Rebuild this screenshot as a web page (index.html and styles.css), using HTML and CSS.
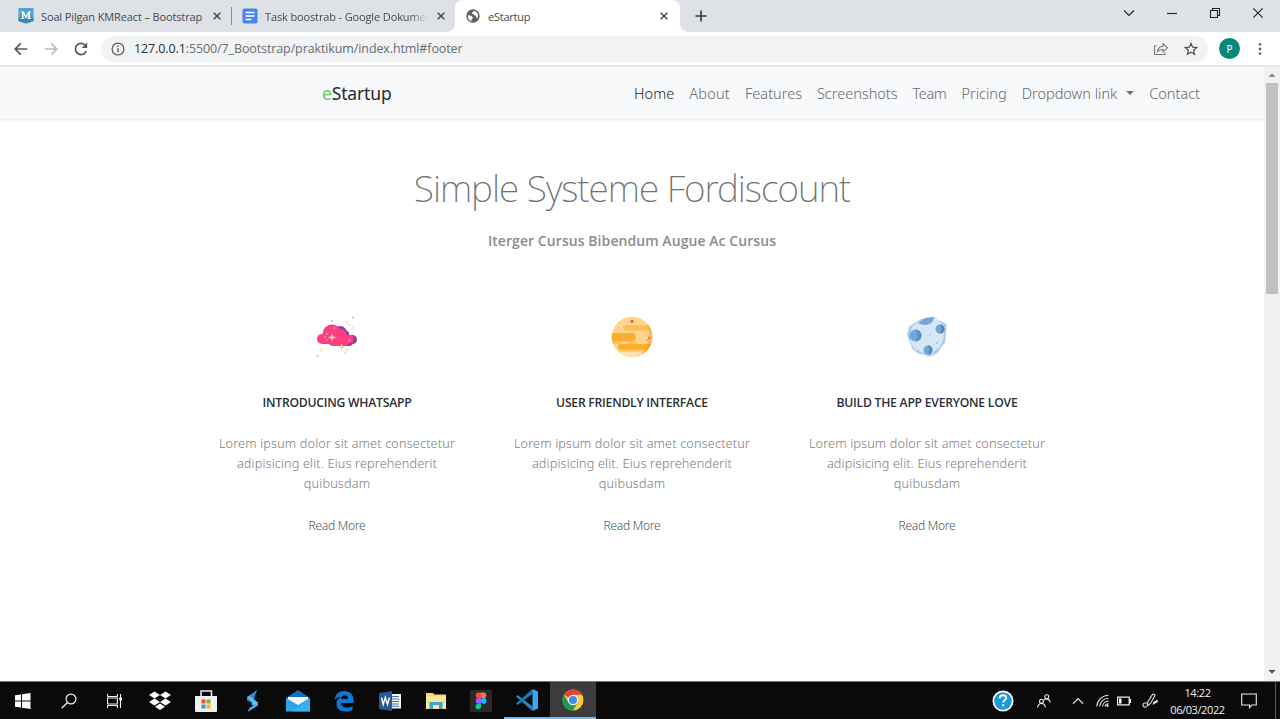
FILE: index.html
```
<!DOCTYPE html>
<html lang="en">
<head>
<meta charset="utf-8">
<title>eStartup</title>
<link rel="stylesheet" href="styles.css">
</head>
<body>
<div class="screen">
  <header class="tabstrip">
    <div class="tab tab-first">
      <svg class="favicon" width="16" height="16" viewBox="0 0 16 16"><path d="M0.5 0h15v13L8 15.6 0.5 13z" fill="#4aa5cf"/><path d="M0.5 9.500h15V13L8 15.600 0.500 13z" fill="#3c88ae"/><path d="M3 11V10h1V4.500H3v-1h3l2 4.500 2-4.500h3v1h-1V10h1v1h-3.500v-1h.7V5.800L8.500 10h-1L5.500 5.800V10h.8v1z" fill="#fff"/></svg>
      <span class="tab-title">Soal Pilgan KMReact – Bootstrap</span>
      <svg class="x" width="8" height="8" viewBox="0 0 8 8"><path d="M.7.7l6.600 6.600M7.300.7L.7 7.300"/></svg>
    </div>
    <i class="divider"></i>
    <div class="tab tab-second">
      <svg class="favicon" width="16" height="16" viewBox="0 0 16 16"><rect x=".5" y=".5" width="15" height="15" rx="2" fill="#4884ee"/><path d="M3.500 4.500h9M3.500 8h9M3.500 11.500h6" stroke="#fff" stroke-width="1.700"/></svg>
      <span class="tab-title fade">Task boostrab - Google Dokumen</span>
      <svg class="x" width="8" height="8" viewBox="0 0 8 8"><path d="M.7.7l6.600 6.600M7.300.7L.7 7.300"/></svg>
    </div>
    <div class="tab tab-active">
      <svg class="favicon" width="14" height="14" viewBox="0 0 14 14"><circle cx="7" cy="7" r="6.700" fill="#5f6368"/><path d="M2 6.200l3.200.5 1.600 1.500-.2 1.500-1.200.6.100 1.900C3 11.500 1.600 9 2 6.200zM8 1.700c-.4 1.500-1.600 1-2 2.200-.2 1.300 1.300.9 1.800 1.900.4 1 1.500.6 2.100 1.100.9.700.2 2 1.500 2.300C13.100 6.600 11.500 2.500 8 1.700z" fill="#fff"/></svg>
      <span class="tab-title">eStartup</span>
      <svg class="x" width="8" height="8" viewBox="0 0 8 8"><path d="M.7.7l6.600 6.600M7.300.7L.7 7.300"/></svg>
    </div>
    <svg class="newtab" width="12" height="12" viewBox="0 0 12 12"><path d="M6 .5v11M.5 6h11" stroke="#35383c" stroke-width="1.600"/></svg>
    <div class="winctl">
      <svg width="12" height="12" viewBox="0 0 12 12"><path d="M1 3.500l5 5 5-5"/></svg>
      <svg width="12" height="12" viewBox="0 0 12 12"><path d="M1 6.500h10"/></svg>
      <svg width="12" height="12" viewBox="0 0 12 12"><path d="M1.500 3.500h7v7h-7zM3.500 3.500v-2h7v7h-2"/></svg>
      <svg width="12" height="12" viewBox="0 0 12 12"><path d="M1.300 1.300l9.400 9.400M10.700 1.300l-9.400 9.400"/></svg>
    </div>
  </header>
  <div class="toolbar">
    <svg class="back" width="14" height="14" viewBox="0 0 14 14"><path d="M13.300 7H1.200M6.800 1.300L1.200 7l5.600 5.700" stroke="#54575b"/></svg>
    <svg class="fwd" width="14" height="14" viewBox="0 0 14 14"><path d="M.7 7h12.100M7.200 1.300L12.800 7l-5.600 5.700" stroke="#b9bbbe"/></svg>
    <svg class="reload" width="14" height="14" viewBox="0 0 14 14"><path d="M12.200 9A5.600 5.600 0 1 1 11 3l1.300 1.400" stroke="#54575b"/><path d="M13.200.6v5.400H7.800z" fill="#54575b" stroke="none"/></svg>
    <div class="omnibox">
      <svg class="info" width="14" height="14" viewBox="0 0 14 14"><circle cx="7" cy="7" r="5.900" fill="none" stroke="#5f6368" stroke-width="1.300"/><path d="M7 6.200v4M7 3.500v1.500" stroke="#5f6368" stroke-width="1.500"/></svg>
      <span class="url"><b>127.0.0.1</b>:5500/7_Bootstrap/praktikum/index.html#footer</span>
      <svg class="share" width="16" height="14" viewBox="0 0 16 14"><path d="M3.500 4H1.500v8.500h10.500V10.500M4.500 9.500c.5-3.300 2.300-5 5.500-5.200V1.800l4.500 4-4.500 4V7.500C7.500 7.400 5.800 8 4.500 9.500z" fill="none" stroke="#77797d" stroke-width="1.100"/></svg>
      <svg class="star" width="14" height="14" viewBox="0 0 14 14"><path d="M7 1.500l1.700 3.700 4 .4-3 2.700.9 4L7 10.200l-3.600 2.100.9-4-3-2.700 4-.4z" fill="none" stroke="#505357" stroke-width="1.300"/></svg>
    </div>
    <span class="avatar">P</span>
    <svg class="dots" width="4" height="14" viewBox="0 0 4 14"><path d="M.8 1.200h2.400v2.400H.8zM.8 5.800h2.400v2.400H.8zM.8 10.400h2.400v2.400H.8z" fill="#5f6368"/></svg>
  </div>
  <div class="viewport">
    <main class="page">
      <nav class="navbar">
        <a class="brand"><em>e</em>Startup</a>
        <div class="links">
          <a class="on">Home</a><a class="wide">About</a><a>Features</a><a>Screenshots</a><a class="tight">Team</a><a>Pricing</a><a class="drop">Dropdown link<i class="caret"></i></a><a>Contact</a>
        </div>
      </nav>
      <section class="intro">
        <h1>Simple Systeme Fordiscount</h1>
        <h2>Iterger Cursus Bibendum Augue Ac Cursus</h2>
      </section>
      <section class="cards">
        <article class="card">
          <svg width="42" height="42" viewBox="0 0 42 42"><g fill="#8f3f9c"><circle cx="24" cy="17" r="7"/><circle cx="28" cy="19" r="5.300"/><circle cx="36.500" cy="23.500" r="4.500"/><rect x="24" y="21" width="13" height="9" rx="4"/></g><g fill="#fc3f7e"><circle cx="16" cy="18" r="9.500"/><circle cx="24.500" cy="19" r="6"/><circle cx="33.500" cy="23" r="4"/><rect x="1" y="18" width="18" height="10" rx="5"/><rect x="12" y="19" width="22" height="11" rx="5"/></g><g fill="#ffd9a0"><path d="M16 17l1.100 3.400 3.400 1.100-3.400 1.100L16 26l-1.100-3.400-3.400-1.100 3.400-1.100zM25.500 27l.9 3.100 3.100.9-3.100.9-.9 3.100-.9-3.100-3.100-.9 3.100-.9z"/><path d="M37 9l.8 2.700 2.700.8-2.700.8L37 16l-.8-2.700-2.700-.8 2.700-.8zM5 30.500l.8 2.700 2.700.8-2.700.8L5 37.500l-.8-2.700-2.700-.8 2.700-.8z" opacity=".65"/></g><g fill="#edae5c"><circle cx="37" cy="1.500" r=".9"/><circle cx="31" cy="6" r=".8"/><circle cx="33" cy="9" r=".8"/><circle cx="16" cy="5" r=".9"/><circle cx="1.500" cy="40" r=".9"/><circle cx="29" cy="37" r=".8"/><circle cx="31" cy="34" r=".8"/></g><g fill="#ffb5bd"><circle cx="9" cy="21" r=".8"/><circle cx="11" cy="18" r=".8"/><circle cx="18" cy="12" r=".8"/><circle cx="11" cy="24" r=".8"/><circle cx="34" cy="24" r=".7"/></g></svg>
          <h3>INTRODUCING WHATSAPP</h3>
          <p>Lorem ipsum dolor sit amet consectetur<br>adipisicing elit. Eius reprehenderit<br>quibusdam</p>
          <a class="more">Read More</a>
        </article>
        <article class="card">
          <svg width="42" height="42" viewBox="0 0 42 42"><defs><clipPath id="planet"><circle cx="21" cy="21" r="20.300"/></clipPath></defs><g clip-path="url(#planet)"><path fill="#ffd48d" d="M0 0h42v42H0z"/><rect x="12" y="9" width="32" height="5.500" rx="2.700" fill="#fdbd57"/><path d="M0 17h20.500a4.200 4.200 0 0 1 0 8.400H0z" fill="#fbad30"/><path d="M20 25.400h6v3H16z" fill="#fdc364"/><rect x="7" y="28" width="36" height="5.500" rx="2.700" fill="#fbad30"/><path d="M0 25.400h10v2.700H0zM8 33.500h34v2H8z" fill="#fdbd57"/><path d="M0 35.500h28.500a1.500 1.500 0 0 1 0 3H26V42H0z" fill="#ffe3b4"/><path d="M33 3c8 9 6 27-4 38l13 1V3z" fill="#f89b24" opacity=".55"/></g><circle cx="21" cy="5.300" r="1.600" fill="#ef5b45"/><circle cx="38" cy="22" r="1" fill="#ef5b45"/><circle cx="36" cy="24" r=".7" fill="#ef7645"/><circle cx="7" cy="12" r=".8" fill="#fbad50"/></svg>
          <h3>USER FRIENDLY INTERFACE</h3>
          <p>Lorem ipsum dolor sit amet consectetur<br>adipisicing elit. Eius reprehenderit<br>quibusdam</p>
          <a class="more">Read More</a>
        </article>
        <article class="card">
          <svg width="42" height="42" viewBox="0 0 42 42"><defs><clipPath id="rock"><path d="M11 5.500C15 2 20 1 24 1.500L28 .8l3 2.700 7 3 2.500 2-.5 9-1 9-4 5-3 5-6 3.500-3 .5-5-2-6-1-6-5-2-6-3-8 2-8z"/></clipPath></defs><g clip-path="url(#rock)"><path d="M0 0h42v42H0z" fill="#a8cdec"/><path d="M12 6l7-4h10l9 7-.5 14-4 8-8 7-7-1-8-2-5-6-2-11 3-8z" fill="#d5e6f5"/><path d="M12 7q8-7 15-6 2 3-2 6-6 4-13 0z" fill="#71a6d5"/></g><circle cx="9.500" cy="19.500" r="6" fill="#71a6d5"/><path d="M9.500 13.500a6 6 0 0 1 0 12q4-6 0-12z" fill="#5d90c5"/><circle cx="34" cy="13" r="4.500" fill="#71a6d5"/><path d="M34 8.500a4.500 4.500 0 0 1 0 9q3-4 0-9z" fill="#5387bd"/><circle cx="22" cy="34" r="4.500" fill="#71a6d5"/><path d="M22 29.500a4.500 4.500 0 0 1 0 9q3-4 0-9z" fill="#5387bd"/><g fill="#93bde2"><circle cx="22" cy="20" r=".8"/><circle cx="24" cy="18" r=".8"/><circle cx="31" cy="27" r=".9"/><circle cx="12" cy="35" r=".9"/></g></svg>
          <h3>BUILD THE APP EVERYONE LOVE</h3>
          <p>Lorem ipsum dolor sit amet consectetur<br>adipisicing elit. Eius reprehenderit<br>quibusdam</p>
          <a class="more">Read More</a>
        </article>
      </section>
    </main>
    <aside class="scroll">
      <svg width="16" height="16" viewBox="0 0 16 16"><path d="M4.500 10L8 6.300l3.500 3.700z" fill="#8b8b8b"/></svg>
      <i class="thumb"></i>
      <svg width="16" height="16" viewBox="0 0 16 16"><path d="M4.500 5L8 8.700 11.500 5z" fill="#505050"/></svg>
    </aside>
  </div>
  <footer class="taskbar">
    <div class="apps">
      <span class="app"><svg width="16" height="16" viewBox="0 0 16 16"><path d="M0 2.200L6 1.400v6.100H0zM7 1.300L15.500 0v7.500H7zM0 8.400h6v6.200l-6-.8zM7 8.400h8.500V16L7 14.800z" fill="#fff"/></svg></span>
      <span class="app"><svg width="16" height="16" viewBox="0 0 16 16"><circle cx="10" cy="6" r="4.900" fill="none" stroke="#eee" stroke-width="1.200"/><path d="M6.500 9.500L.7 15.300" stroke="#eee" stroke-width="1.300"/></svg></span>
      <span class="app"><svg width="16" height="16" viewBox="0 0 16 16"><path d="M.6 1v2.500h9.800V1M.6 15v-2.500h9.800V15M.6 5h9.800v6H.6zM13.500 1v14" fill="none" stroke="#eee" stroke-width="1.100"/><path d="M12.300 4.500h2.700v2.800h-2.700z" fill="#fff"/></svg></span>
      <span class="app"><svg width="22" height="20" viewBox="0 0 22 20"><path d="M5.500.5L11 4 5.500 7.500 0 4zM16.500.5L22 4l-5.500 3.500L11 4zM5.500 7.500L11 11l-5.500 3.500L0 11zM16.500 7.500L22 11l-5.500 3.500L11 11zM11 12.500l5 3.200-5 3.300-5-3.300z" fill="#fff"/></svg></span>
      <span class="app"><svg width="22" height="22" viewBox="0 0 22 22"><path d="M6 7V1h10.500V7" fill="none" stroke="#eee" stroke-width="1.500"/><path d="M0 6h22v15q0 1-1 1H1q-1 0-1-1z" fill="#f0f0f0"/><path d="M6.500 9.500h4v4h-4z" fill="#e9512a"/><path d="M11.500 9.500h4v4h-4z" fill="#76b629"/><path d="M6.500 14.500h4v4h-4z" fill="#299fdf"/><path d="M11.500 14.500h4v4h-4z" fill="#f3b521"/></svg></span>
      <span class="app"><svg width="12" height="22" viewBox="0 0 12 22"><path d="M11 0L1 7v3.500L6.500 13 8.300 8z" fill="#3f83d6"/><path d="M1 7.500l2.500-1.500L12 12.500 8.500 16 5.500 14.500 6 12z" fill="#51c5f2"/><path d="M1.500 22L3.500 18l8.500-5.500V15.500z" fill="#56a5e4"/></svg></span>
      <span class="app"><svg width="24" height="22" viewBox="0 0 24 22"><path d="M0 8L12 0l12 8v13H0z" fill="#176fc0"/><path d="M2 7h20v9H2z" fill="#f4f8fb"/><path d="M0 8l12 7 12-7v13.500H0z" fill="#2aa5ec"/><path d="M24 8L6 21.500h18z" fill="#46b8f4" opacity=".6"/></svg></span>
      <span class="app"><svg width="20" height="22" viewBox="0 0 20 22"><path d="M.5 10C1.500 4 5 1 10.500 1 16.500 1 19.500 5 19.500 10.500V13H7c.2 3 2.200 4.500 5.500 4.500 2.400 0 4.300-.6 6-1.600v4c-2 1-4.500 1.600-7 1.600C6 21.500 2.500 18.500 2.500 14c0-3.500 1.800-6 4.500-7.300C4.500 7 2 8 .5 10zM7 9h7c0-2.300-1-3.700-3.300-3.700C8.600 5.300 7.400 6.700 7 9z" fill="#0b78d3" fill-rule="evenodd"/></svg></span>
      <span class="app"><svg width="22" height="20" viewBox="0 0 22 20"><path d="M11 3h11v14.500H11z" fill="#f4f6fa"/><path d="M13 5.500h7M13 8h7M13 10.500h7M13 13h7M13 15.300h7" stroke="#4a6cae" stroke-width="1"/><path d="M0 2l13-2v20L0 18z" fill="#2b5797"/><path d="M2.500 6.500l1.700 7 2.100-7 2.200 7 1.900-7" fill="none" stroke="#fff" stroke-width="1.400"/></svg></span>
      <span class="app"><svg width="20" height="18" viewBox="0 0 20 18"><path d="M0 1h7l1.500 1.500H20V17H0z" fill="#f7d877"/><path d="M0 4h20v13H0z" fill="#fde592"/><path d="M3.500 17v-7h13v7H13v-4H7v4z" fill="#3aa7d4"/></svg></span>
      <span class="app"><svg width="22" height="22" viewBox="0 0 22 22"><rect width="22" height="22" rx="1" fill="#292929"/><path d="M11 2.500H8.500a2.800 2.800 0 0 0 0 5.600H11z" fill="#f24e1e"/><path d="M11 2.500h2.500a2.800 2.800 0 0 1 0 5.600H11z" fill="#ff7262"/><path d="M11 8.100H8.500a2.800 2.800 0 0 0 0 5.600H11z" fill="#a259ff"/><circle cx="13.700" cy="10.900" r="2.800" fill="#1abcfe"/><path d="M11 13.700H8.500a2.800 2.800 0 1 0 2.500 2.800z" fill="#0acf83"/></svg></span>
      <span class="app open"><svg width="22" height="22" viewBox="0 0 22 22"><path d="M0 7.500L1.500 6 16.500 17.500V22z" fill="#2489ca"/><path d="M0 14.500L1.500 16 16.500 5V0z" fill="#1a78b8"/><path d="M16.500 0L22 2.500v17L16.500 22z" fill="#36a7ee"/></svg></span>
      <span class="app open current"><svg width="22" height="22" viewBox="0 0 22 22"><circle cx="11" cy="11" r="10.500" fill="#f9cb3b"/><path d="M11 11L1.900 5.700A10.500 10.500 0 0 1 20.100 5.700H11z" fill="#dc4437"/><path d="M1.900 5.700A10.500 10.500 0 0 0 11 21.500L15.600 13.600 11 11 6.400 13.600z" fill="#189b58"/><circle cx="11" cy="11" r="5.200" fill="#f5f5f5"/><circle cx="11" cy="11" r="4.100" fill="#4387ef"/></svg></span>
    </div>
    <div class="tray">
      <svg class="help" width="22" height="22" viewBox="0 0 22 22"><circle cx="11" cy="11" r="10.500" fill="#fff"/><circle cx="11" cy="11" r="8.800" fill="#169bd8"/><path d="M7.700 8.300c.2-2 1.500-3 3.300-3s3.200 1 3.200 2.700c0 2.300-3 2.300-3 4.500" fill="none" stroke="#fff" stroke-width="2"/><path d="M10.100 14.200h2.200v2.200h-2.200z" fill="#fff"/></svg>
      <svg class="people" width="14" height="14" viewBox="0 0 14 14"><g fill="none" stroke="#e8e8e8" stroke-width="1.100"><circle cx="4.500" cy="7.300" r="2"/><path d="M.7 13.500c.2-5.400 7.400-5.400 7.600 0"/><circle cx="9.700" cy="2.700" r="2"/><path d="M6.800 6.300c1.500-2.300 6-1.600 6.500 2.200"/></g></svg>
      <svg class="up" width="12" height="8" viewBox="0 0 12 8"><path d="M1 6.700l5-5 5 5" fill="none" stroke="#eee" stroke-width="1.200"/></svg>
      <svg class="wifi" width="13" height="13" viewBox="0 0 13 13"><g fill="none" stroke="#ddd" stroke-width="1.100"><path d="M.7 12.500A12 12 0 0 1 12.500 1.200M3.700 12.500a9 9 0 0 1 8.800-8.300M6.500 12.500a6 6 0 0 1 6-5.400M9 12.500a3.500 3.500 0 0 1 3.500-2.700"/></g><circle cx="11.600" cy="11.700" r="1.100" fill="#fff"/></svg>
      <svg class="bat" width="14" height="10" viewBox="0 0 14 10"><path d="M.6 1.200h11.600v7.600H.6zM12.200 3.500h1.300v3h-1.300" fill="none" stroke="#eee" stroke-width="1.200"/><path d="M2 2.500h2.500v5H2z" fill="#fff"/></svg>
      <svg class="pen" width="16" height="16" viewBox="0 0 16 16"><path d="M5 10H2.500Q.7 10.500 1 12.500 1.500 14.500 4.500 14M5.200 13l.6-4L10.500 1.500q2-1 2.500 1L8.500 10.500zM11 10l4-2.500q1 1.500-1 2t-3 2" fill="none" stroke="#e5e5e5" stroke-width="1.100"/></svg>
      <div class="clock"><span>14:22</span><span>06/03/2022</span></div>
      <svg class="note" width="16" height="16" viewBox="0 0 16 16"><path d="M.7 1h14.600v11H11l-2.500 2.700V12H.7z" fill="none" stroke="#eee" stroke-width="1.100"/></svg>
      <i class="peek"></i>
    </div>
  </footer>
</div>
</body>
</html>
```
FILE: styles.css
```
* { box-sizing: border-box; }
body { margin: 0; font-family: "Noto Sans", "Open Sans", sans-serif; background: #fff; }
svg { display: block; flex: none; }
.screen { width: 1280px; height: 719px; display: flex; flex-direction: column; overflow: hidden; }

.tabstrip { height: 32px; background: #dee1e6; display: flex; align-items: center; flex: none; font-family: "Open Sans", sans-serif; }
.tab { display: flex; align-items: center; height: 32px; font-size: 11px; color: #45494d; }
.tab-first { width: 231px; padding: 0 10px 0 18px; }
.tab-second { width: 224px; padding: 0 11px 0 10px; border-radius: 0 0 8px 0; }
.tab-active { width: 225px; padding: 0 12px 0 11px; background: #fff; border-radius: 8px 8px 0 0; position: relative; left: -1px; }
.tab-active::before, .tab-active::after { content: ""; position: absolute; bottom: 0; width: 8px; height: 8px; }
.tab-active::before { left: -8px; background: radial-gradient(circle at 0 0, #dee1e6 7.500px, #fff 8px); }
.tab-active::after { right: -8px; background: radial-gradient(circle at 100% 0, #dee1e6 7.500px, #fff 8px); }
.tab-title { margin-left: 7px; white-space: nowrap; letter-spacing: -.13px; }
.tab-active .tab-title { margin-left: 8px; letter-spacing: -.25px; }
.fade { width: 164px; overflow: hidden; -webkit-mask-image: linear-gradient(90deg, #000 88%, transparent); mask-image: linear-gradient(90deg, #000 88%, transparent); }
.x { margin-left: auto; fill: none; stroke: #45494d; stroke-width: 1.500; }
.divider { width: 1px; height: 18px; background: #898d92; }
.newtab { margin-left: 14px; }
.winctl { margin: -6px 16px 0 auto; display: flex; gap: 31px; fill: none; stroke: #222; stroke-width: 1.100; }

.toolbar { height: 35px; flex: none; background: #fff; border-bottom: 2px solid #e6e8ea; display: flex; align-items: center; padding: 0 18px 0 14px; }
.back, .fwd, .reload { fill: none; stroke-width: 1.700; }
.fwd, .reload { margin-left: 16px; }
.omnibox { margin-left: 13px; width: 1107px; height: 26px; border-radius: 13px; background: #f1f3f4; display: flex; align-items: center; padding: 0 9px 0 10px; }
.url { margin-left: 9px; font: 12.500px "Open Sans", sans-serif; letter-spacing: -.11px; color: #6a6d71; white-space: nowrap; }
.url b { font-weight: 400; color: #2b2d30; }
.share { margin-left: auto; }
.star { margin-left: 15px; margin-right: 1px; }
.avatar { margin-left: 11px; width: 21px; height: 21px; border-radius: 50%; background: #06897a; color: #fff; font-size: 10px; display: grid; place-items: center; }
.dots { margin-left: auto; }

.viewport { flex: 1; display: flex; min-height: 0; }
.page { flex: 1; background: #fff; overflow: hidden; }
.navbar { height: 52px; background: #f8f9fa; box-shadow: 0 1px 3px rgba(0,0,0,.1); display: flex; align-items: center; justify-content: space-between; padding: 0 64px 0 322px; }
.brand { font-size: 17.500px; letter-spacing: -.15px; color: #26292c; }
.brand em { font-style: normal; color: #71c55d; }
.links { display: flex; gap: 15px; font-size: 14.500px; font-weight: 300; color: #66686a; white-space: nowrap; }
.links .on { color: #1c1d1f; }
.links .wide { letter-spacing: .25px; }
.links .tight { letter-spacing: -.4px; }
.drop { display: flex; align-items: center; }
.caret { margin-left: 9px; border: 4.500px solid transparent; border-top-color: #707173; border-bottom: 0; }
.intro { text-align: center; padding-top: 44px; color: #8a8c8e; }
h1 { margin: 0; font-size: 37px; line-height: 50px; font-weight: 200; letter-spacing: -1px; color: #6f7173; }
h2 { margin: 18px 0 0; font: 600 14px/20px "Open Sans", sans-serif; letter-spacing: .07px; }
.cards { display: grid; grid-template-columns: repeat(3, 295px); justify-content: center; margin-top: 64.500px; }
.card { display: flex; flex-direction: column; align-items: center; text-align: center; }
h3 { margin: 36px 0 0; font: 600 12.200px/18px "Open Sans", sans-serif; letter-spacing: -.25px; color: #2c2f33; white-space: nowrap; }
p { margin: 21px 0 0; font-size: 12.700px; line-height: 20.200px; font-weight: 300; letter-spacing: .15px; color: #7b7d7f; white-space: nowrap; }
.more { margin-top: 24px; font-size: 12px; line-height: 18px; font-weight: 300; letter-spacing: -.25px; color: #4b535a; }

.scroll { width: 16px; background: #f1f1f1; display: flex; flex-direction: column; }
.thumb { width: 12px; height: 211px; margin: 0 auto auto; background: #c1c1c1; }

.taskbar { height: 38px; flex: none; background: #0a0a0a; border-top: 1px solid #777; display: flex; justify-content: space-between; }
.apps { display: flex; }
.app { width: 45.850px; display: grid; place-items: center; }
.open { border-bottom: 2px solid #76b9ed; background: linear-gradient(#0a0a0a, #0a0a0a); }
.open.current { background: #3c3c3c; }
.tray { display: flex; align-items: center; }
.people { margin-left: 23px; }
.up { margin-left: 21px; }
.wifi { margin-left: 12px; }
.bat { margin-left: 8px; }
.pen { margin-left: 11px; }
.clock { margin-left: 12px; display: flex; flex-direction: column; align-items: center; width: 55px; font: 11px/17px "Open Sans", sans-serif; letter-spacing: -.4px; color: #f0f0f0; }
.note { margin-left: 16px; }
.peek { width: 1px; align-self: stretch; background: #555; margin: 0 4px 0 18px; }
```
